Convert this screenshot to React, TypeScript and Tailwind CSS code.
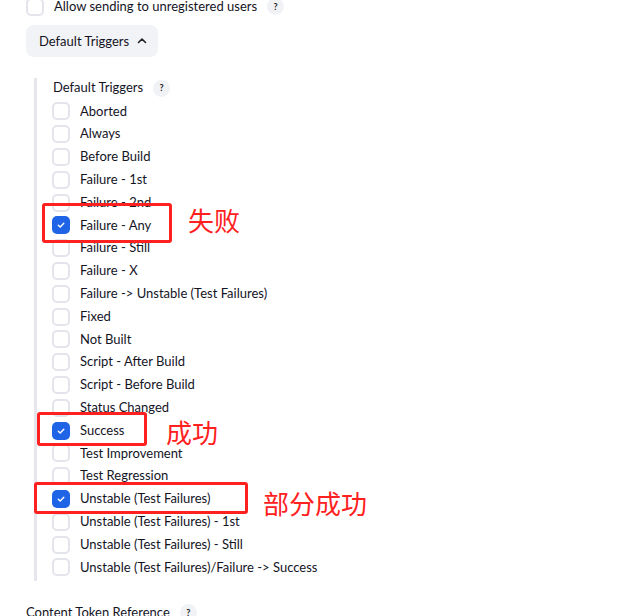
import React from "react";

const items: { label: string; checked?: boolean }[] = [
  { label: "Aborted" },
  { label: "Always" },
  { label: "Before Build" },
  { label: "Failure - 1st" },
  { label: "Failure - 2nd" },
  { label: "Failure - Any", checked: true },
  { label: "Failure - Still" },
  { label: "Failure - X" },
  { label: "Failure -> Unstable (Test Failures)" },
  { label: "Fixed" },
  { label: "Not Built" },
  { label: "Script - After Build" },
  { label: "Script - Before Build" },
  { label: "Status Changed" },
  { label: "Success", checked: true },
  { label: "Test Improvement" },
  { label: "Test Regression" },
  { label: "Unstable (Test Failures)", checked: true },
  { label: "Unstable (Test Failures) - 1st" },
  { label: "Unstable (Test Failures) - Still" },
  { label: "Unstable (Test Failures)/Failure -> Success" },
];

function Box({ checked }: { checked?: boolean }) {
  if (checked) {
    return (
      <span className="flex h-[18px] w-[18px] shrink-0 items-center justify-center rounded-[5px] bg-[#1f63e6]">
        <svg width="10" height="10" viewBox="0 0 10 10" fill="none">
          <path d="M2.3 5.2 L4.2 7 L7.8 3.2" stroke="white" strokeWidth="1.4" strokeLinecap="round" strokeLinejoin="round" />
        </svg>
      </span>
    );
  }
  return <span className="h-[18px] w-[18px] shrink-0 rounded-[5px] border-2 border-[#e3e4ec] bg-white" />;
}

function Help() {
  return (
    <span className="flex h-[17px] w-[17px] shrink-0 items-center justify-center rounded-full bg-[#f1f2f6] text-[9px] font-bold text-[#222]">
      ?
    </span>
  );
}

const red = "absolute rounded-[3px] border-[3px] border-[#ff2020]";
const redText = "absolute whitespace-nowrap text-[26px] leading-none text-[#ff2020]";

export default function App() {
  return (
    <div
      className="relative h-[616px] w-[620px] overflow-hidden bg-white text-[13px] text-[#14141f]"
      style={{ fontFamily: 'Lato, "Noto Sans CJK SC", sans-serif' }}
    >
      <div className="-mt-[5px] flex h-[23px] items-center gap-[10px] pl-[26px]">
        <Box />
        <span className="whitespace-nowrap">Allow sending to unregistered users</span>
        <Help />
      </div>
      <div className="mt-[7px] ml-[26px] flex h-[32px] w-[132px] items-center gap-[7px] rounded-[8px] bg-[#f2f3f7] pl-[13px] pt-[2px]">
        <span className="whitespace-nowrap">Default Triggers</span>
        <svg width="12" height="12" viewBox="0 0 12 12" fill="none" className="-mt-[2px]">
          <path d="M2.5 7.5 L6 4 L9.5 7.5" stroke="#222" strokeWidth="1.6" strokeLinecap="round" strokeLinejoin="round" />
        </svg>
      </div>
      <div className="mt-[21px] ml-[34px] flex flex-col border-l-[3px] border-[#e6e6ec] pl-[15px] pb-[2px]">
        <div className="flex h-[20px] items-center gap-[10px] pl-[1px]">
          <span className="whitespace-nowrap">Default Triggers</span>
          <Help />
        </div>
        <div className="mt-[2px] flex flex-col">
          {items.map((it) => (
            <div key={it.label} className="flex h-[22.8px] items-center gap-[10px]">
              <Box checked={it.checked} />
              <span className="whitespace-nowrap">{it.label}</span>
            </div>
          ))}
        </div>
      </div>
      <div className="mt-[22px] flex items-center gap-[10px] pl-[26px]">
        <span className="whitespace-nowrap">Content Token Reference</span>
        <Help />
      </div>

      <div className={red} style={{ left: 42, top: 203, width: 130, height: 40 }} />
      <div className={redText} style={{ left: 188, top: 208 }}>失败</div>
      <div className={red} style={{ left: 37, top: 412, width: 110, height: 34 }} />
      <div className={redText} style={{ left: 166, top: 420 }}>成功</div>
      <div className={red} style={{ left: 34, top: 482, width: 214, height: 32 }} />
      <div className={redText} style={{ left: 263, top: 491 }}>部分成功</div>
    </div>
  );
}
